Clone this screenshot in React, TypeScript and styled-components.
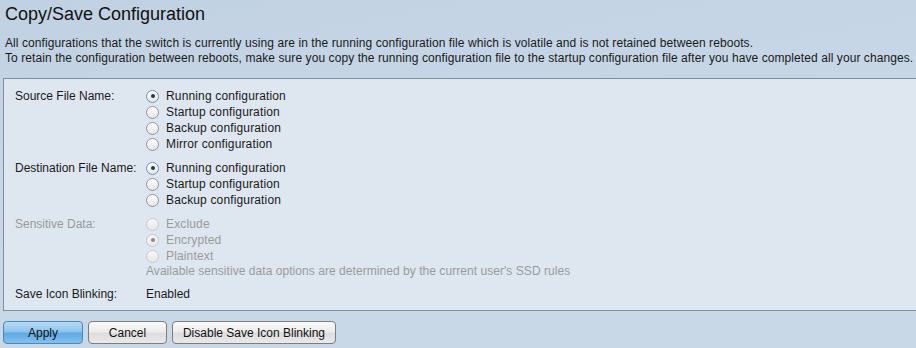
import * as React from 'react';
import styled, { createGlobalStyle } from 'styled-components';

const GlobalStyle = createGlobalStyle`
  html, body {
    margin: 0;
    padding: 0;
  }
  body {
    font-family: "Liberation Sans", Arial, Helvetica, sans-serif;
    font-size: 12px;
    color: #1a1a1a;
    background: #c7d7e6;
  }
`;

const Page = styled.div`
  width: 916px;
  height: 348px;
  box-sizing: border-box;
  padding: 3px 0 0 3px;
  overflow: hidden;
  background: linear-gradient(170deg, #c0d1e3 0%, #c4d4e4 20%, #c8d8e7 60%, #c8d8e7 100%);
`;

const Title = styled.h1`
  margin: 0 0 0 2px;
  font-size: 18px;
  font-weight: normal;
  line-height: 22px;
  color: #111;
`;

const Intro = styled.p`
  margin: 11px 0 0 2px;
  line-height: 15px;
  letter-spacing: 0.08px;
  white-space: nowrap;
`;

const Panel = styled.div`
  margin-top: 12px;
  border-top: 1px solid #7e8e9c;
  border-left: 1px solid #7e8e9c;
  border-bottom: 1px solid #7e8e9c;
  background: #dee7f0;
  padding: 9px 0 8px 11px;
  display: flex;
  flex-direction: column;
  gap: 8px;
`;

const Field = styled.div<{ $disabled?: boolean }>`
  display: grid;
  grid-template-columns: 131px 1fr;
  color: ${(p) => (p.$disabled ? '#9a9a9a' : '#1a1a1a')};
`;

const Label = styled.div`
  line-height: 16px;
`;

const Options = styled.div`
  display: flex;
  flex-direction: column;
  letter-spacing: 0.15px;
`;

const Option = styled.label`
  display: flex;
  align-items: center;
  height: 16px;
  gap: 7px;
`;

const Note = styled.div`
  line-height: 14px;
  letter-spacing: 0.05px;
`;

const Radio = styled.span<{ $checked?: boolean; $disabled?: boolean }>`
  width: 13px;
  height: 13px;
  box-sizing: border-box;
  border-radius: 50%;
  border: 1px solid
    ${(p) => (p.$disabled ? '#c4c8cc' : p.$checked ? '#6f8fb8' : '#8f969c')};
  background: ${(p) =>
    p.$disabled
      ? 'linear-gradient(#f6f7f8, #e6e8ea)'
      : 'linear-gradient(#ffffff, #e2e4e6)'};
  display: flex;
  align-items: center;
  justify-content: center;
  flex: none;

  &::after {
    content: '';
    display: ${(p) => (p.$checked ? 'block' : 'none')};
    width: 4px;
    height: 4px;
    border-radius: 50%;
    background: ${(p) => (p.$disabled ? '#8a8a8a' : '#2b3440')};
  }
`;

const Value = styled.div`
  line-height: 16px;
`;

const ButtonBar = styled.div`
  display: flex;
  gap: 5px;
  margin-top: 10px;
`;

const Button = styled.button<{ $primary?: boolean; $w: number }>`
  width: ${(p) => p.$w}px;
  height: 23px;
  font-family: "Liberation Sans", Arial, Helvetica, sans-serif;
  font-size: 12px;
  color: #111;
  border-radius: 4px;
  padding: 0;
  border: 1px solid ${(p) => (p.$primary ? '#4d86b8' : '#7d7d7d')};
  background: ${(p) =>
    p.$primary
      ? 'linear-gradient(#b9dcf6 0%, #8cc4ee 45%, #5fa9e4 55%, #82c1f0 100%)'
      : 'linear-gradient(#fbfbfb 0%, #ececec 45%, #dddddd 55%, #e9e9e9 100%)'};
`;

const sources = [
  'Running configuration',
  'Startup configuration',
  'Backup configuration',
  'Mirror configuration',
];
const destinations = [
  'Running configuration',
  'Startup configuration',
  'Backup configuration',
];
const sensitive = ['Exclude', 'Encrypted', 'Plaintext'];

function RadioGroup(props: { items: string[]; selected: number; disabled?: boolean }) {
  return (
    <>
      {props.items.map((item, i) => (
        <Option key={item}>
          <Radio $checked={i === props.selected} $disabled={props.disabled} />
          {item}
        </Option>
      ))}
    </>
  );
}

export default function App() {
  return (
    <Page>
      <GlobalStyle />
      <Title>Copy/Save Configuration</Title>
      <Intro>
        All configurations that the switch is currently using are in the running configuration file which is volatile and is not retained between reboots.
        <br />
        To retain the configuration between reboots, make sure you copy the running configuration file to the startup configuration file after you have completed all your changes.
      </Intro>
      <Panel>
        <Field>
          <Label>Source File Name:</Label>
          <Options>
            <RadioGroup items={sources} selected={0} />
          </Options>
        </Field>
        <Field>
          <Label>Destination File Name:</Label>
          <Options>
            <RadioGroup items={destinations} selected={0} />
          </Options>
        </Field>
        <Field $disabled>
          <Label>Sensitive Data:</Label>
          <Options>
            <RadioGroup items={sensitive} selected={1} disabled />
            <Note>Available sensitive data options are determined by the current user's SSD rules</Note>
          </Options>
        </Field>
        <Field>
          <Label>Save Icon Blinking:</Label>
          <Value>Enabled</Value>
        </Field>
      </Panel>
      <ButtonBar>
        <Button $primary $w={80}>Apply</Button>
        <Button $w={79}>Cancel</Button>
        <Button $w={164}>Disable Save Icon Blinking</Button>
      </ButtonBar>
    </Page>
  );
}
